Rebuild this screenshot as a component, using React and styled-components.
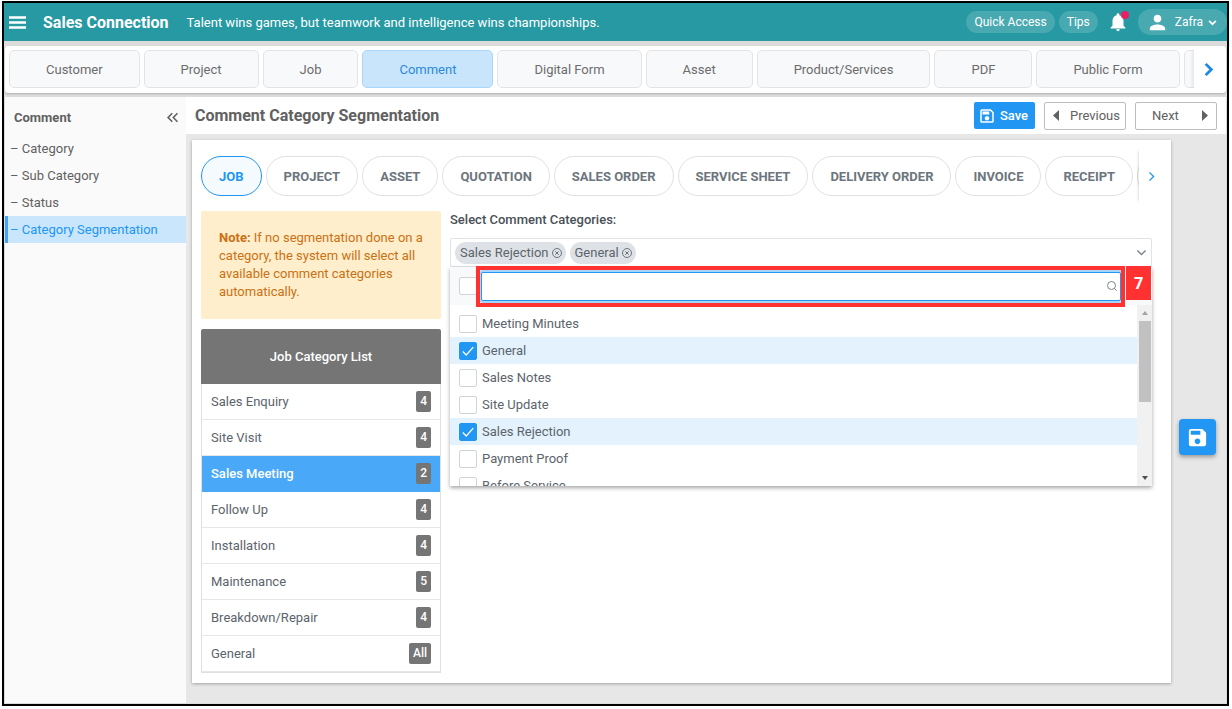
import React, { useState } from "react";
import styled, { createGlobalStyle, css } from "styled-components";
import {
  MdNotifications,
  MdPerson,
  MdSave,
  MdOutlineSave,
  MdKeyboardDoubleArrowLeft,
} from "react-icons/md";

const modules = [
  "Customer",
  "Project",
  "Job",
  "Comment",
  "Digital Form",
  "Asset",
  "Product/Services",
  "PDF",
  "Public Form",
];

const sideLinks = ["Category", "Sub Category", "Status", "Category Segmentation"];

const segments = [
  "JOB",
  "PROJECT",
  "ASSET",
  "QUOTATION",
  "SALES ORDER",
  "SERVICE SHEET",
  "DELIVERY ORDER",
  "INVOICE",
  "RECEIPT",
];

const jobCategories = [
  { name: "Sales Enquiry", count: "4" },
  { name: "Site Visit", count: "4" },
  { name: "Sales Meeting", count: "2" },
  { name: "Follow Up", count: "4" },
  { name: "Installation", count: "4" },
  { name: "Maintenance", count: "5" },
  { name: "Breakdown/Repair", count: "4" },
  { name: "General", count: "All" },
];

const options = [
  "Meeting Minutes",
  "General",
  "Sales Notes",
  "Site Update",
  "Sales Rejection",
  "Payment Proof",
  "Before Service",
];

function Chevron({ size, dir = "right", width = 2 }) {
  const points = dir === "right" ? "5,2 11,8 5,14" : "2,5 8,11 14,5";
  return (
    <svg width={size} height={size} viewBox="0 0 16 16" aria-hidden="true">
      <polyline points={points} fill="none" stroke="currentColor" strokeWidth={width} />
    </svg>
  );
}

function MenuIcon() {
  return (
    <svg width="17" height="13" viewBox="0 0 17 13" aria-hidden="true">
      <path d="M0 1.5h17M0 6.5h17M0 11.5h17" stroke="currentColor" strokeWidth="2.6" />
    </svg>
  );
}

function Triangle({ left }) {
  return (
    <svg width="6" height="11" viewBox="0 0 6 11" aria-hidden="true">
      <polygon points={left ? "6,0 0,5.5 6,11" : "0,0 6,5.5 0,11"} fill="currentColor" />
    </svg>
  );
}

function CloseCircle() {
  return (
    <svg width="10" height="10" viewBox="0 0 20 20" aria-hidden="true">
      <g fill="none" stroke="currentColor" strokeWidth="2">
        <circle cx="10" cy="10" r="9" />
        <path d="M6.5 6.5l7 7M13.5 6.5l-7 7" />
      </g>
    </svg>
  );
}

function SearchIcon() {
  return (
    <svg width="10" height="10" viewBox="0 0 20 20" aria-hidden="true">
      <g fill="none" stroke="currentColor" strokeWidth="2">
        <circle cx="9" cy="9" r="8" />
        <path d="M14.5 14.5l5 5" />
      </g>
    </svg>
  );
}

function Header() {
  return (
    <TopBar>
      <IconButton aria-label="Menu">
        <MenuIcon />
      </IconButton>
      <Brand>Sales Connection</Brand>
      <Quote>Talent wins games, but teamwork and intelligence wins championships.</Quote>
      <TopActions>
        <TopPill>Quick Access</TopPill>
        <TopPill>Tips</TopPill>
        <BellButton aria-label="Notifications">
          <MdNotifications size={22} />
          <Dot />
        </BellButton>
        <UserPill>
          <MdPerson size={23} />
          Zafra
          <Chevron size={9} dir="down" width={3} />
        </UserPill>
      </TopActions>
    </TopBar>
  );
}

function Sidebar() {
  return (
    <Side>
      <SideHead>
        Comment
        <IconButton aria-label="Collapse">
          <MdKeyboardDoubleArrowLeft size={19} />
        </IconButton>
      </SideHead>
      {sideLinks.map((link) => (
        <SideLink href="#" key={link} $active={link === "Category Segmentation"}>
          – {link}
        </SideLink>
      ))}
    </Side>
  );
}

function CategorySelect() {
  const [selected, setSelected] = useState(["Sales Rejection", "General"]);
  const [query, setQuery] = useState("");

  const toggle = (name) =>
    setSelected((prev) =>
      prev.includes(name) ? prev.filter((n) => n !== name) : [...prev, name]
    );

  const visible = options.filter((o) => o.toLowerCase().includes(query.toLowerCase()));

  return (
    <SelectColumn>
      <FieldLabel htmlFor="category-search">Select Comment Categories:</FieldLabel>
      <SelectBox>
        {selected.map((name) => (
          <Chip key={name}>
            {name}
            <ChipClose aria-label={`Remove ${name}`} onClick={() => toggle(name)}>
              <CloseCircle />
            </ChipClose>
          </Chip>
        ))}
        <SelectArrow>
          <Chevron size={11} dir="down" width={2} />
        </SelectArrow>
        <Panel>
          <PanelHead>
            <Check type="checkbox" aria-label="Select all" />
            <SearchWrap>
              <SearchInput
                id="category-search"
                type="text"
                value={query}
                onChange={(e) => setQuery(e.target.value)}
              />
              <SearchMark>
                <SearchIcon />
              </SearchMark>
            </SearchWrap>
            <Callout />
            <Step>7</Step>
          </PanelHead>
          <PanelBody>
            <OptionList>
              {visible.map((name) => (
                <Option key={name} $checked={selected.includes(name)}>
                  <Check
                    type="checkbox"
                    checked={selected.includes(name)}
                    onChange={() => toggle(name)}
                  />
                  {name}
                </Option>
              ))}
            </OptionList>
            <Scrollbar aria-hidden="true">
              <ScrollArrow $up />
              <Thumb />
              <ScrollArrow />
            </Scrollbar>
          </PanelBody>
        </Panel>
      </SelectBox>
    </SelectColumn>
  );
}

function App() {
  return (
    <>
      <GlobalStyle />
      <Frame>
        <Header />
        <ModuleBar>
          <Scroller>
            {modules.map((name) => (
              <ModuleTab key={name} $active={name === "Comment"}>
                {name}
              </ModuleTab>
            ))}
            <ModuleTab tabIndex={-1} aria-hidden="true" />
          </Scroller>
          <ModuleNext aria-label="More modules">
            <Chevron size={15} width={3} />
          </ModuleNext>
        </ModuleBar>
        <Body>
          <Sidebar />
          <Main>
            <TitleBar>
              <Title>Comment Category Segmentation</Title>
              <SaveButton>
                <MdOutlineSave size={18} />
                Save
              </SaveButton>
              <NavButton>
                <Triangle left />
                Previous
              </NavButton>
              <NavButton $next>
                Next
                <Triangle />
              </NavButton>
            </TitleBar>
            <Card>
              <SegmentRow>
                <Scroller>
                  {segments.map((name) => (
                    <SegmentPill key={name} $active={name === "JOB"}>
                      {name}
                    </SegmentPill>
                  ))}
                  <SegmentPill tabIndex={-1} aria-hidden="true" />
                </Scroller>
                <SegmentNext aria-label="More segments">
                  <Chevron size={11} width={2} />
                </SegmentNext>
              </SegmentRow>
              <Columns>
                <ListColumn>
                  <Note>
                    <b>Note:</b> If no segmentation done on a category, the system will
                    select all available comment categories automatically.
                  </Note>
                  <ListHead>Job Category List</ListHead>
                  <List>
                    {jobCategories.map((item) => (
                      <ListItem key={item.name} $active={item.name === "Sales Meeting"}>
                        {item.name}
                        <Count>{item.count}</Count>
                      </ListItem>
                    ))}
                  </List>
                </ListColumn>
                <CategorySelect />
              </Columns>
            </Card>
            <FloatingSave aria-label="Save">
              <MdSave size={23} />
            </FloatingSave>
          </Main>
        </Body>
      </Frame>
    </>
  );
}

export default App;

const GlobalStyle = createGlobalStyle`
  * {
    box-sizing: border-box;
  }
  body {
    margin: 0;
    background: #fff;
    font-family: Roboto, "Liberation Sans", sans-serif;
    font-size: 13px;
    color: #616161;
  }
  button {
    font: inherit;
    color: inherit;
    cursor: pointer;
  }
  svg {
    flex: none;
  }
`;

const Frame = styled.div`
  display: flex;
  flex-direction: column;
  min-height: calc(100vh - 4px);
  margin: 1px 3px 3px 2px;
  border: 2px solid #000;
  background: #dcdcdc;
`;

const TopBar = styled.header`
  display: flex;
  align-items: center;
  height: 38px;
  padding-left: 5px;
  background: #2799a3;
  color: #fff;
`;

const IconButton = styled.button`
  display: flex;
  padding: 0;
  border: 0;
  background: none;
`;

const Brand = styled.div`
  margin-left: 17px;
  font-size: 16px;
  font-weight: 700;
`;

const Quote = styled.div`
  margin-left: 18px;
`;

const TopActions = styled.div`
  display: flex;
  align-items: center;
  margin-left: auto;
  gap: 4px;
  font-size: 12px;
`;

const TopPill = styled.button`
  height: 22px;
  padding: 0 8px;
  border: 0;
  border-radius: 11px;
  background: rgba(255, 255, 255, 0.16);
`;

const BellButton = styled(IconButton)`
  position: relative;
  margin: 0 5px;
`;

const Dot = styled.span`
  position: absolute;
  top: 0;
  right: 0;
  width: 8px;
  height: 8px;
  border-radius: 50%;
  background: #e91e63;
`;

const UserPill = styled(TopPill)`
  display: flex;
  align-items: center;
  gap: 5px;
  height: 26px;
  padding: 0 10px 0 8px;
  border-radius: 13px;

  svg:first-child {
    margin-right: 1px;
  }
`;

const ModuleBar = styled.nav`
  display: flex;
  margin: 5px 1px 4px;
  padding: 4px 0 5px 4px;
  border-radius: 3px;
  background: #fff;
  box-shadow: 0 1px 2px rgba(0, 0, 0, 0.2);
`;

const Scroller = styled.div`
  display: flex;
  flex: 1;
  min-width: 0;
  gap: 4px;
  overflow: hidden;
`;

const ModuleTab = styled.button`
  flex: none;
  height: 38px;
  padding: 0 36px;
  border: 1px solid #e2e4e6;
  border-radius: 5px;
  background: #f8f9fb;
  color: #6c6c6c;
  ${(p) =>
    p.$active &&
    css`
      border-color: #a9d5fa;
      background: #c9e5fc;
      color: #2b8ad8;
    `}
`;

const ModuleNext = styled(IconButton)`
  align-items: center;
  justify-content: center;
  width: 32px;
  padding-right: 4px;
  color: #1e88e5;
  box-shadow: -2px 0 3px rgba(0, 0, 0, 0.08);
  clip-path: inset(0 0 0 -4px);
`;

const Body = styled.div`
  display: flex;
  flex: 1;
  margin: 0 1px 1px;
`;

const Side = styled.aside`
  flex: none;
  width: 181px;
  background: #fafafa;
`;

const SideHead = styled.div`
  display: flex;
  align-items: center;
  justify-content: space-between;
  height: 38px;
  padding: 2px 4px 0 9px;
  font-weight: 700;
`;

const SideLink = styled.a`
  display: block;
  padding-left: 2px;
  border-left: 3px solid transparent;
  line-height: 27px;
  color: #616161;
  text-decoration: none;
  ${(p) =>
    p.$active &&
    css`
      border-color: #42a5f5;
      background: #c9e6fd;
      color: #2196f3;
    `}
`;

const Main = styled.main`
  position: relative;
  flex: 1;
  min-width: 0;
  background: #e7e7e7;
`;

const TitleBar = styled.div`
  display: flex;
  align-items: center;
  gap: 9px;
  height: 37px;
  padding: 0 9px;
  background: #fff;
`;

const Title = styled.h1`
  flex: 1;
  margin: 0;
  font-size: 16px;
  font-weight: 700;
`;

const SaveButton = styled.button`
  display: flex;
  align-items: center;
  gap: 4px;
  height: 27px;
  padding: 0 7px 0 4px;
  border: 0;
  border-radius: 2px;
  background: #2196f3;
  color: #fff;
  font-weight: 500;
`;

const NavButton = styled.button`
  display: flex;
  align-items: center;
  justify-content: space-between;
  width: 82px;
  height: 28px;
  padding: ${(p) => (p.$next ? "0 8px 0 16px" : "0 5px 0 8px")};
  border: 1px solid #bdbdbd;
  border-radius: 2px;
  background: #fff;
`;

const Card = styled.section`
  margin: 6px 55px 19px 6px;
  padding: 10px 7px 10px 9px;
  background: #fff;
  box-shadow: 0 1px 3px rgba(0, 0, 0, 0.3);
`;

const SegmentRow = styled.div`
  display: flex;
`;

const SegmentPill = styled.button`
  flex: none;
  height: 40px;
  margin: 6px 0;
  padding: 0 17px;
  border: 1px solid #dfe1e3;
  border-radius: 20px;
  background: #fff;
  color: #6c757d;
  font-weight: 700;
  ${(p) =>
    p.$active &&
    css`
      border-color: #2196f3;
      background: #f5faff;
      color: #2196f3;
    `}
`;

const SegmentNext = styled(IconButton)`
  align-items: center;
  justify-content: center;
  width: 25px;
  color: #2196f3;
  box-shadow: -2px 0 2px -1px rgba(0, 0, 0, 0.12);
`;

const Columns = styled.div`
  display: flex;
  gap: 9px;
  margin: 9px 12px 0 0;
`;

const ListColumn = styled.div`
  flex: none;
  width: 240px;
`;

const Note = styled.p`
  margin: 0 0 10px;
  padding: 18px;
  border-radius: 2px;
  background: #ffeecc;
  color: #cc7011;
  line-height: 18px;

  b {
    font-weight: 700;
  }
`;

const ListHead = styled.h2`
  margin: 0;
  border-radius: 2px 2px 0 0;
  background: #757575;
  color: #fff;
  font-size: 13px;
  font-weight: 500;
  line-height: 55px;
  text-align: center;
`;

const List = styled.ul`
  margin: 0;
  padding: 0;
  border: 1px solid #dee0e2;
  border-top: 0;
  color: #5c646c;
  list-style: none;
`;

const ListItem = styled.li`
  display: flex;
  align-items: center;
  justify-content: space-between;
  height: 36px;
  padding: 0 9px;
  border-bottom: 1px solid #e4e6e8;
  ${(p) =>
    p.$active &&
    css`
      border-color: #49a8f7;
      background: #49a8f7;
      color: #fff;
      font-weight: 500;
    `}
`;

const Count = styled.span`
  padding: 0 4px;
  border-radius: 2px;
  background: #757575;
  color: #fff;
  font-size: 12px;
  font-weight: 500;
  line-height: 21px;
`;

const SelectColumn = styled.div`
  flex: 1;
  min-width: 0;
  color: #5c646c;
`;

const FieldLabel = styled.label`
  display: block;
  margin-bottom: 9px;
  color: #495057;
  font-weight: 500;
  line-height: 18px;
`;

const SelectBox = styled.div`
  position: relative;
  display: flex;
  align-items: center;
  gap: 4px;
  height: 29px;
  padding: 0 4px;
  border: 1px solid #e0e4e8;
  border-radius: 2px;
`;

const Chip = styled.span`
  display: flex;
  align-items: center;
  gap: 3px;
  height: 22px;
  padding: 0 4px 0 5px;
  border-radius: 11px;
  background: #dee2e6;
`;

const ChipClose = styled(IconButton)`
  color: #6c757d;
`;

const SelectArrow = styled.span`
  display: flex;
  margin-left: auto;
  color: #7d858c;
`;

const Panel = styled.div`
  position: absolute;
  top: 28px;
  left: -1px;
  right: -1px;
  background: #fff;
  box-shadow: 0 2px 4px rgba(0, 0, 0, 0.35);
`;

const PanelHead = styled.div`
  position: relative;
  display: flex;
  align-items: center;
  gap: 4px;
  height: 38px;
  padding: 0 31px 0 9px;
  background: #f8f9fa;
`;

const Check = styled.input`
  appearance: none;
  flex: none;
  width: 18px;
  height: 18px;
  margin: 0;
  border: 1px solid #ced4da;
  border-radius: 2px;
  background: #fff;

  &:checked {
    border-color: #2196f3;
    background: #2196f3
      url("data:image/svg+xml,%3Csvg xmlns='http://www.w3.org/2000/svg' viewBox='0 0 16 16'%3E%3Cpath d='M2 8.5l4 4 8-9' fill='none' stroke='white' stroke-width='1.5'/%3E%3C/svg%3E")
      center / 14px no-repeat;
  }
`;

const SearchWrap = styled.div`
  position: relative;
  flex: 1;
`;

const SearchInput = styled.input`
  display: block;
  width: 100%;
  height: 29px;
  padding: 0 20px 0 5px;
  border: 1px solid #2196f3;
  border-radius: 2px;
  outline: 0;
  font: inherit;
  box-shadow: 0 0 0 2px #a6d5fa;
`;

const SearchMark = styled.span`
  position: absolute;
  top: 9px;
  right: 4px;
  display: flex;
  color: #7d858c;
`;

const Callout = styled.div`
  position: absolute;
  inset: -1px 27px -2px 26px;
  border: 4px solid #ff3131;
  pointer-events: none;
`;

const Step = styled.div`
  position: absolute;
  top: -1px;
  right: 1px;
  width: 25px;
  background: #ff3131;
  color: #fff;
  font: 700 16px / 34px "Open Sans", sans-serif;
  text-align: center;
`;

const PanelBody = styled.div`
  display: flex;
  height: 181px;
`;

const OptionList = styled.div`
  flex: 1;
  padding-top: 5px;
  overflow: hidden;
`;

const Option = styled.label`
  display: flex;
  align-items: center;
  gap: 5px;
  height: 27px;
  padding-left: 9px;
  background: ${(p) => (p.$checked ? "#e3f2fd" : "#fff")};
`;

const Scrollbar = styled.div`
  display: flex;
  flex-direction: column;
  align-items: center;
  width: 15px;
  padding: 6px 0;
  background: #f1f1f1;
`;

const ScrollArrow = styled.span`
  margin-top: ${(p) => (p.$up ? "0" : "auto")};
  border: 3px solid transparent;
  ${(p) =>
    p.$up
      ? css`
          border-top: 0;
          border-bottom: 4px solid #a3a3a3;
        `
      : css`
          border-bottom: 0;
          border-top: 4px solid #505050;
        `}
`;

const Thumb = styled.span`
  width: 12px;
  height: 81px;
  margin-top: 6px;
  background: #c1c1c1;
`;

const FloatingSave = styled.button`
  position: absolute;
  top: 322px;
  right: 10px;
  display: flex;
  align-items: center;
  justify-content: center;
  width: 37px;
  height: 36px;
  padding: 0;
  border: 0;
  border-radius: 4px;
  background: #2196f3;
  color: #fff;
  box-shadow: 0 2px 4px rgba(0, 0, 0, 0.35);
`;
